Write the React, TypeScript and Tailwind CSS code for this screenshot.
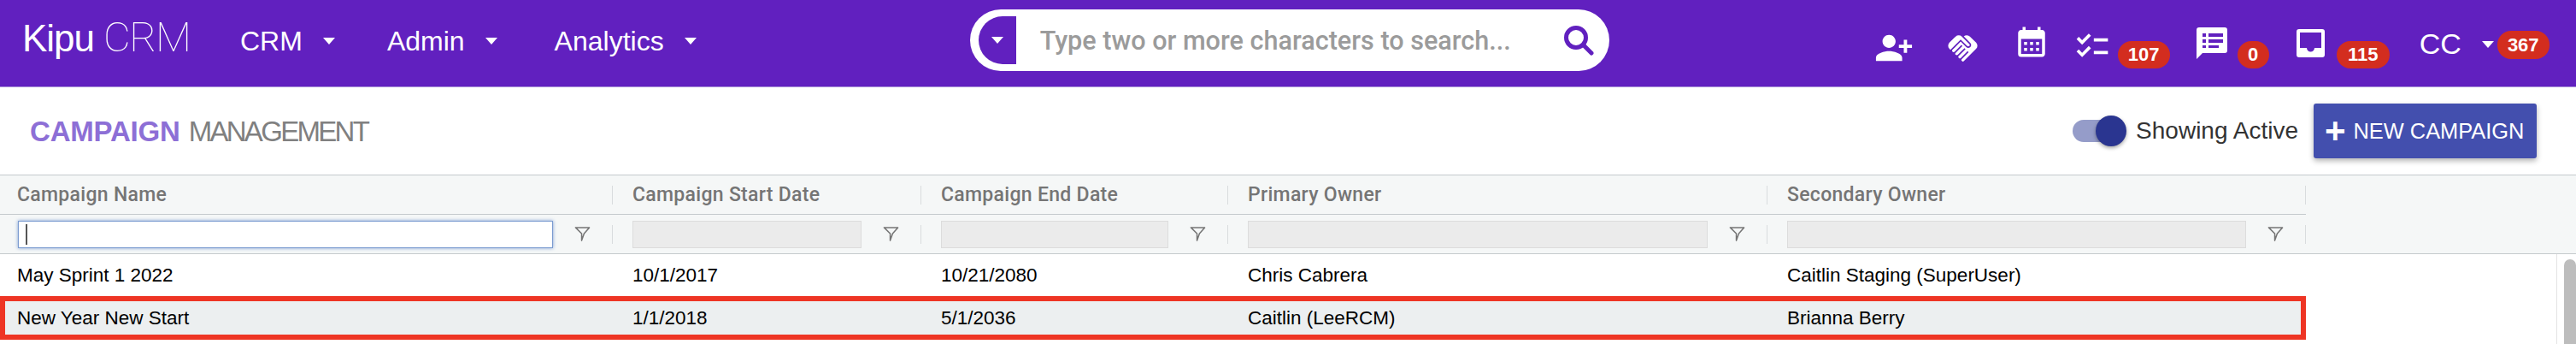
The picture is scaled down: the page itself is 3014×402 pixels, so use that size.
import React from "react";
import { MdCalendarMonth, MdChecklist, MdHandshake, MdPersonAdd } from "react-icons/md";

const gridCols = "grid grid-cols-[717px_361px_359px_631px_630px] w-[2698px]";

const columns = [
  "Campaign Name",
  "Campaign Start Date",
  "Campaign End Date",
  "Primary Owner",
  "Secondary Owner",
];

const rows = [
  ["May Sprint 1 2022", "10/1/2017", "10/21/2080", "Chris Cabrera", "Caitlin Staging (SuperUser)"],
  ["New Year New Start", "1/1/2018", "5/1/2036", "Caitlin (LeeRCM)", "Brianna Berry"],
];

function Caret() {
  return (
    <span className="block size-0 border-x-[7px] border-t-[8px] border-x-transparent border-t-white" />
  );
}

function NavItem({ label, className }: { label: string; className: string }) {
  return (
    <div className={`flex items-center gap-[24px] text-[32px] text-white ${className}`}>
      <span>{label}</span>
      <Caret />
    </div>
  );
}

function Badge({ value, className }: { value: string; className: string }) {
  return (
    <span
      className={`flex h-[32px] items-center justify-center rounded-[16px] bg-[#d32d1f] text-[22px] font-bold text-white ${className}`}
    >
      {value}
    </span>
  );
}

function MessageIcon() {
  return (
    <svg viewBox="0 0 36 37" className="w-[36px] h-[37px]">
      <path
        fill="#fff"
        fillRule="evenodd"
        d="M3 0h30a3 3 0 0 1 3 3v24a3 3 0 0 1-3 3H7l-7 7V3a3 3 0 0 1 3-3ZM7 7v4h4V7H7Zm7 0v4h17V7H14ZM7 14v4h4v-4H7Zm7 0v4h17v-4H14ZM7 21v3h4v-3H7Zm7 0v3h12v-3H14Z"
      />
    </svg>
  );
}

function InboxIcon() {
  return (
    <svg viewBox="0 0 33 33" className="w-[33px] h-[33px]">
      <path
        fill="#fff"
        fillRule="evenodd"
        d="M3 0h27a3 3 0 0 1 3 3v27a3 3 0 0 1-3 3H3a3 3 0 0 1-3-3V3a3 3 0 0 1 3-3Zm1 4v18h8a4.5 4.5 0 0 0 9 0h8V4H4Z"
      />
    </svg>
  );
}

function SearchIcon() {
  return (
    <svg viewBox="0 0 36 36" className="w-[36px] h-[36px]" fill="none" stroke="#6120bf">
      <circle cx="15" cy="15" r="11.5" strokeWidth="5" />
      <path d="M23.5 23.5 33 33" strokeWidth="5" strokeLinecap="round" />
    </svg>
  );
}

function FunnelIcon() {
  return (
    <svg viewBox="0 0 20 20" className="w-[19px] h-[19px]" fill="none" stroke="#757575" strokeWidth="1.6">
      <path d="M1.5 2h17l-6.5 7.5-3 8.5V9.5Z" strokeLinejoin="round" />
    </svg>
  );
}

function Header() {
  return (
    <header className="flex h-[102px] items-center border-b border-[#a98fd8] bg-[#6120bf] pl-[26px]">
      <div className="mt-[-14px] flex w-[196px] items-baseline text-[44px] leading-none text-white">
        <span className="tracking-[-1px]">Kipu</span>
        <span className="ml-[11px] font-['Roboto',sans-serif] text-[49px] font-thin tracking-[-1.5px]">CRM</span>
      </div>
      <NavItem label="CRM" className="ml-[59px] mt-[-6px]" />
      <NavItem label="Admin" className="ml-[61px] mt-[-6px]" />
      <NavItem label="Analytics" className="ml-[67px] mt-[-6px]" />

      <div className="mb-[8px] ml-[320px] flex h-[72px] w-[748px] items-center rounded-full bg-white pl-[10px] pr-[18px]">
        <div className="flex h-[56px] w-[44px] items-center justify-center rounded-l-full rounded-r-[4px] bg-[#6120bf]">
          <Caret />
        </div>
        <span className="ml-[28px] mt-[2px] flex-1 font-['Roboto',sans-serif] text-[30.6px] font-medium text-[#9b9b9b]">
          Type two or more characters to search...
        </span>
        <SearchIcon />
      </div>

      <div className="ml-[310px] flex items-start text-white">
        <MdPersonAdd className="mt-[11px] size-[46px] -scale-x-100" />
        <MdHandshake className="ml-[37px] mt-[14px] size-[41px]" />
        <MdCalendarMonth className="ml-[39px] mt-[6px] size-[42px]" />
        <MdChecklist className="ml-[28px] mt-[10px] size-[44px]" />
        <Badge value="107" className="ml-[8px] mt-[26px] w-[61px]" />
        <div className="ml-[31px] mt-[10px]">
          <MessageIcon />
        </div>
        <Badge value="0" className="ml-[12px] mt-[26px] w-[37px]" />
        <div className="ml-[32px] mt-[12px]">
          <InboxIcon />
        </div>
        <Badge value="115" className="ml-[14px] mt-[26px] w-[62px]" />
        <span className="ml-[35px] mt-[4px] text-[34px]">CC</span>
        <span className="ml-[24px] mt-[26px]">
          <Caret />
        </span>
        <Badge value="367" className="ml-[4px] mt-[14px] !h-[33px] w-[61px]" />
      </div>
    </header>
  );
}

function Toolbar() {
  return (
    <div className="flex h-[102px] items-center justify-between pl-[35px] pr-[46px]">
      <h1 className="text-[33px] leading-none">
        <span className="font-bold tracking-[-0.2px] text-[#8d6fd6]">CAMPAIGN</span>
        <span className="ml-[10px] tracking-[-2.7px] text-[#808080]">MANAGEMENT</span>
      </h1>
      <div className="flex items-center">
        <div className="relative h-[26px] w-[52px] rounded-full bg-[#959cc9]">
          <span className="absolute left-[27px] top-[-5px] size-[36px] rounded-full bg-[#2a3590] shadow-[0_2px_4px_rgba(0,0,0,0.35)]" />
        </div>
        <span className="ml-[22px] text-[28px] text-[#333]">Showing Active</span>
        <button className="ml-[18px] flex h-[64px] w-[261px] items-center rounded-[3px] bg-[#434fae] pl-[13px] text-[25.4px] font-medium text-white shadow-[0_3px_6px_rgba(0,0,0,0.3)]">
          <span className="mr-[9px] text-[42px] font-bold leading-none">+</span>
          NEW CAMPAIGN
        </button>
      </div>
    </div>
  );
}

function Table() {
  return (
    <div>
      <div className="border-y border-[#c5cacd] bg-[#f5f7f7]">
        <div className={`${gridCols} border-b border-[#c5cacd]`}>
          {columns.map((name, i) => (
            <div key={name} className={`flex h-[45px] items-center ${i === 0 ? "pl-[20px]" : "pl-[23px]"}`}>
              <span className="mt-[2px] flex-1 font-['Roboto',sans-serif] text-[23px] font-medium tracking-[0.3px] text-[#757575]">
                {name}
              </span>
              <span className="h-[22px] w-[1px] bg-[#d9dcde]" />
            </div>
          ))}
        </div>
        <div className={`${gridCols} h-[45px]`}>
          {columns.map((name, i) => (
            <div key={name} className={`flex items-center ${i === 0 ? "pl-[21px]" : "pl-[23px]"}`}>
              {i === 0 ? (
                <div className="flex h-[32px] flex-1 items-center border border-[#7a9bd0] bg-white pl-[8px] shadow-[0_0_4px_#7a9bd0]">
                  <span className="h-[24px] w-[1.5px] bg-[#555]" />
                </div>
              ) : (
                <div className="h-[32px] flex-1 border border-[#dcdcdc] bg-[#ebebeb]" />
              )}
              <span className="mx-[25px] flex items-center">
                <FunnelIcon />
              </span>
              <span className="h-[22px] w-[1px] bg-[#d9dcde]" />
            </div>
          ))}
        </div>
      </div>

      <div className="flex">
        <div className="w-[2698px]">
          <div className={`${gridCols} h-[49px] items-center text-[22.5px] text-black`}>
            {rows[0].map((cell, i) => (
              <div key={cell} className={i === 0 ? "pl-[20px]" : "pl-[23px]"}>
                {cell}
              </div>
            ))}
          </div>
          <div className="grid h-[51px] w-[2698px] grid-cols-[711px_361px_359px_631px_624px] items-center border-[6px] border-[#ee3524] bg-[#eceff0] text-[22.5px] text-black">
            {rows[1].map((cell, i) => (
              <div key={cell} className={i === 0 ? "pl-[14px]" : "pl-[23px]"}>
                {cell}
              </div>
            ))}
          </div>
        </div>
        <div className="ml-auto w-[23px] border-l border-[#e3e3e3] pl-[8px] pt-[6px]">
          <div className="h-[120px] rounded-t-full bg-[#bdbdbd]" />
        </div>
      </div>
    </div>
  );
}

export default function App() {
  return (
    <div className="h-[402px] w-[3014px] overflow-hidden bg-white font-['Liberation_Sans',sans-serif]">
      <Header />
      <Toolbar />
      <Table />
    </div>
  );
}
